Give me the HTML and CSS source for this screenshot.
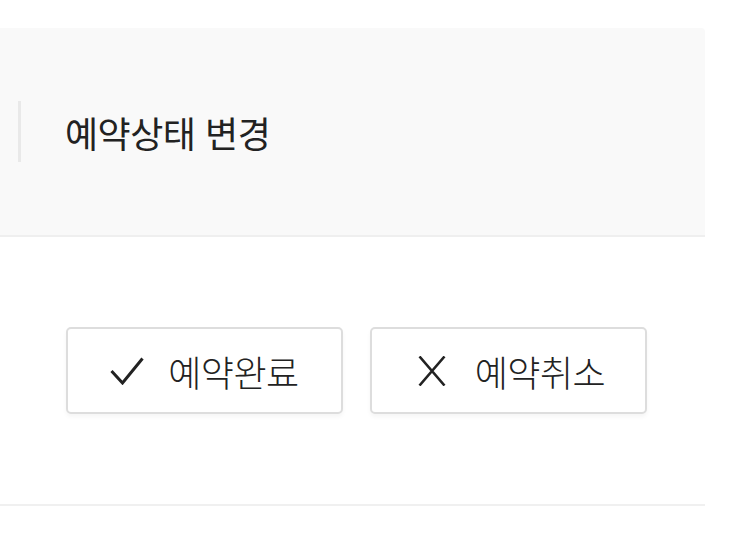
FILE: index.html
```html
<!DOCTYPE html>
<html lang="ko">
<head>
<meta charset="utf-8">
<title>예약상태 변경</title>
<link rel="stylesheet" href="styles.css">
</head>
<body>
<div class="page">
  <div class="panel-head">
    <span class="head-bar"></span>
    <h2 class="head-title">예약상태 변경</h2>
  </div>
  <div class="panel-body">
    <button class="btn" type="button">
      <svg class="ico" width="34" height="28" viewBox="0 0 34 28" aria-hidden="true">
        <path d="M1.5 14 L12.5 26 L32.5 1.5" fill="none" stroke="#222" stroke-width="3" stroke-linecap="butt" stroke-linejoin="miter"/>
      </svg>
      <span class="btn-text">예약완료</span>
    </button>
    <button class="btn btn-cancel" type="button">
      <svg class="ico" width="28" height="30" viewBox="0 0 28 30" aria-hidden="true">
        <path d="M1.5 0.5 L26.5 29.5 M26.5 0.5 L1.5 29.5" fill="none" stroke="#222" stroke-width="2.6"/>
      </svg>
      <span class="btn-text">예약취소</span>
    </button>
  </div>
</div>
</body>
</html>
```
FILE: styles.css
```css
html, body {
  margin: 0;
  padding: 0;
  background: #ffffff;
}
body {
  font-family: "Noto Sans CJK KR", "Noto Sans", sans-serif;
  color: #222222;
}
.page {
  width: 705px;
  padding-top: 28px;
}
.panel-head {
  box-sizing: border-box;
  height: 209px;
  background: #f9f9f9;
  border-bottom: 2px solid #efefef;
  border-top-right-radius: 4px;
  display: flex;
  align-items: center;
  padding-left: 18px;
}
.head-bar {
  width: 3px;
  height: 61px;
  background: #e9e9e9;
  margin-right: 44px;
}
.head-title {
  margin: 0;
  font-size: 36px;
  font-weight: 400;
  letter-spacing: -0.5px;
  line-height: 1;
  color: #222222;
}
.panel-body {
  display: flex;
  gap: 27px;
  padding: 90px 0 90px 66px;
  border-bottom: 2px solid #f0f0f0;
}
.btn {
  width: 277px;
  height: 87px;
  box-sizing: border-box;
  border: 2px solid #dddddd;
  border-radius: 5px;
  background: #ffffff;
  box-shadow: 0 3px 4px rgba(0, 0, 0, 0.04);
  display: flex;
  align-items: center;
  justify-content: center;
  gap: 24px;
  padding: 0;
  font-family: inherit;
  cursor: pointer;
}
.btn-cancel {
  gap: 29px;
  padding-left: 6px;
}
.ico {
  display: block;
  flex: none;
}
.btn-text {
  font-size: 36px;
  font-weight: 300;
  letter-spacing: -0.5px;
  line-height: 1;
  color: #222222;
}
```
